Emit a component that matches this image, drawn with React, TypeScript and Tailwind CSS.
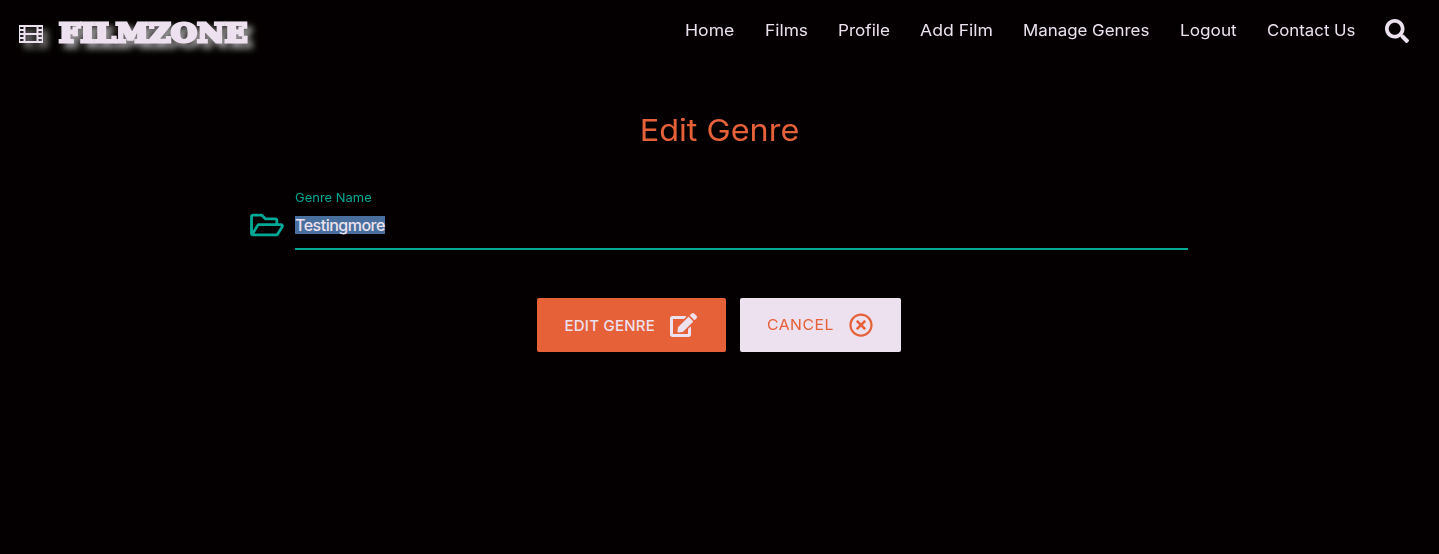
import { FaEdit, FaRegFolderOpen, FaRegTimesCircle, FaSearch } from "react-icons/fa";

const links = [
  { label: "Home", box: "w-[50px]", text: "scale-x-[1.1]" },
  { label: "Films", box: "w-[43px]", text: "scale-x-[1.085]" },
  { label: "Profile", box: "w-[52px]", text: "scale-x-[1.07]" },
  { label: "Add Film", box: "w-[73px]", text: "scale-x-[1.1]" },
  { label: "Manage Genres", box: "w-[127px]", text: "scale-x-[1.055]" },
  { label: "Logout", box: "w-[57px]", text: "scale-x-[1.075]" },
  { label: "Contact Us", box: "w-[88px]", text: "scale-x-[1.05]" },
];

function FilmIcon() {
  return (
    <svg viewBox="0 0 24 18" className="h-[18px] w-6" fill="none" stroke="currentColor">
      <path d="M5.5 0V18M18.5 0V18" strokeWidth="2" />
      <path d="M5.5 1H18.5M5.5 9H18.5M5.5 17H18.5" strokeWidth="2" />
      <path d="M.6 0V18M23.4 0V18" strokeWidth="1.2" />
      <path d="M0 1H5.5M0 5H5.5M0 9H5.5M0 13H5.5M0 17H5.5M18.5 1H24M18.5 5H24M18.5 9H24M18.5 13H24M18.5 17H24" strokeWidth="1.8" />
    </svg>
  );
}

export default function App() {
  return (
    <div className="min-h-[554px] bg-[#040001] font-['Inter',sans-serif] text-[#ede1ef]">
      <header className="flex h-16 items-start justify-between pr-[30px] pl-[19px]">
        <a className="flex items-start drop-shadow-[5px_5px_3px_rgba(235,235,235,0.65)]">
          <span className="mt-[25px]"><FilmIcon /></span>
          <span className="mt-3 ml-4 origin-left scale-x-[1.12] font-['DejaVu_Serif',serif] text-[26.5px] leading-[41px] font-bold tracking-[0.3px] [-webkit-text-stroke:3px_#ede1ef]">
            FILMZONE
          </span>
        </a>
        <nav className="flex items-start gap-[30px] pt-[18px]">
          {links.map((l) => (
            <a key={l.label} className={`${l.box} text-base leading-6 whitespace-nowrap`}>
              <span className={`inline-block origin-left ${l.text}`}>{l.label}</span>
            </a>
          ))}
          <FaSearch className="mt-px size-6" />
        </nav>
      </header>
      <main className="mx-auto w-[939px]">
        <h1 className="scale-x-[1.08] pt-12 text-center text-[30px] leading-9 text-[#e66038]">Edit Genre</h1>
        <div className="mt-[42px] flex">
          <FaRegFolderOpen className="mt-[19.5px] mb-[0.5px] h-[30px] w-[34px] text-[#00a896]" />
          <div className="ml-[11px] w-[893px] border-b-2 border-[#00a896] pb-[14px]">
            <label className="block h-4 w-max origin-left scale-x-[1.08] text-xs leading-4 text-[#00a896]">Genre Name</label>
            <div className="mt-[10px] flex h-[18px]">
              <span className="w-[90px] bg-[#486f9d] text-base leading-[18px] font-medium tracking-[-0.5px]">Testingmore</span>
            </div>
          </div>
        </div>
        <div className="mt-12 mr-[2px] flex justify-center gap-[14px]">
          <button className="flex h-[54px] w-[189px] items-center rounded-[2px] bg-[#e66038] pl-7 text-[15px]">
            <span className="w-[105px] pt-[2px] text-left font-medium tracking-[0.25px]">EDIT GENRE</span>
            <FaEdit className="h-6 w-[27px]" />
          </button>
          <button className="flex h-[54px] w-[161px] items-center rounded-[2px] bg-[#ede1ef] pl-[27px] text-[15px] text-[#e66038]">
            <span className="w-[82px] text-left tracking-[0.5px]">
              <span className="inline-block origin-left scale-x-[1.05]">CANCEL</span>
            </span>
            <FaRegTimesCircle className="size-6" />
          </button>
        </div>
      </main>
    </div>
  );
}
